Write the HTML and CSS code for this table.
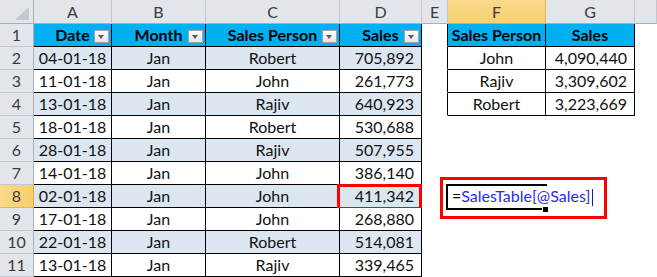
FILE: index.html
```html
<!DOCTYPE html>
<html>
<head>
<meta charset="utf-8">
<link rel="stylesheet" href="styles.css">
</head>
<body>
<div class="sheet">
  <!-- header row -->
  <div class="ch corner"><svg class="tri" width="14" height="13" viewBox="0 0 14 13"><polygon points="14,0 14,13 0,13" fill="#c3c8ce"/></svg></div>
  <div class="ch">A</div>
  <div class="ch">B</div>
  <div class="ch">C</div>
  <div class="ch">D</div>
  <div class="ch">E</div>
  <div class="ch sel">F</div>
  <div class="ch">G</div>
  <div class="ch"></div>

  <!-- row 1 -->
  <div class="rh">1</div>
  <div class="t hd">Date<span class="fb"></span></div>
  <div class="t hd">Month<span class="fb"></span></div>
  <div class="t hd">Sales Person<span class="fb"></span></div>
  <div class="t hd">Sales<span class="fb"></span></div>
  <div class="e edge"></div>
  <div class="t hd">Sales Person</div>
  <div class="t hd">Sales</div>
  <div class="e"></div>

  <!-- row 2 -->
  <div class="rh">2</div>
  <div class="t alt">04-01-18</div>
  <div class="t alt">Jan</div>
  <div class="t alt">Robert</div>
  <div class="t alt num">705,892</div>
  <div class="e edge"></div>
  <div class="t">John</div>
  <div class="t num">4,090,440</div>
  <div class="e"></div>

  <!-- row 3 -->
  <div class="rh">3</div>
  <div class="t">11-01-18</div>
  <div class="t">Jan</div>
  <div class="t">John</div>
  <div class="t num">261,773</div>
  <div class="e edge"></div>
  <div class="t">Rajiv</div>
  <div class="t num">3,309,602</div>
  <div class="e"></div>

  <!-- row 4 -->
  <div class="rh">4</div>
  <div class="t alt">13-01-18</div>
  <div class="t alt">Jan</div>
  <div class="t alt">Rajiv</div>
  <div class="t alt num">640,923</div>
  <div class="e edge"></div>
  <div class="t">Robert</div>
  <div class="t num">3,223,669</div>
  <div class="e"></div>

  <!-- row 5 -->
  <div class="rh">5</div>
  <div class="t">18-01-18</div>
  <div class="t">Jan</div>
  <div class="t">Robert</div>
  <div class="t num">530,688</div>
  <div class="e"></div>
  <div class="e"></div>
  <div class="e"></div>
  <div class="e"></div>

  <!-- row 6 -->
  <div class="rh">6</div>
  <div class="t alt">28-01-18</div>
  <div class="t alt">Jan</div>
  <div class="t alt">Rajiv</div>
  <div class="t alt num">507,955</div>
  <div class="e"></div>
  <div class="e"></div>
  <div class="e"></div>
  <div class="e"></div>

  <!-- row 7 -->
  <div class="rh">7</div>
  <div class="t">14-01-18</div>
  <div class="t">Jan</div>
  <div class="t">John</div>
  <div class="t num">386,140</div>
  <div class="e"></div>
  <div class="e"></div>
  <div class="e"></div>
  <div class="e"></div>

  <!-- row 8 -->
  <div class="rh sel">8</div>
  <div class="t alt">02-01-18</div>
  <div class="t alt">Jan</div>
  <div class="t alt">John</div>
  <div class="t alt num mark">411,342</div>
  <div class="e"></div>
  <div class="e act"><span class="eq">=</span><span class="ref">SalesTable[@Sales]</span><span class="caret"></span></div>
  <div class="e"></div>
  <div class="e"></div>

  <!-- row 9 -->
  <div class="rh">9</div>
  <div class="t">17-01-18</div>
  <div class="t">Jan</div>
  <div class="t">John</div>
  <div class="t num">268,880</div>
  <div class="e"></div>
  <div class="e"></div>
  <div class="e"></div>
  <div class="e"></div>

  <!-- row 10 -->
  <div class="rh">10</div>
  <div class="t alt">22-01-18</div>
  <div class="t alt">Jan</div>
  <div class="t alt">Robert</div>
  <div class="t alt num">514,081</div>
  <div class="e"></div>
  <div class="e"></div>
  <div class="e"></div>
  <div class="e"></div>

  <!-- row 11 -->
  <div class="rh">11</div>
  <div class="t">13-01-18</div>
  <div class="t">Jan</div>
  <div class="t">Rajiv</div>
  <div class="t num">339,465</div>
  <div class="e"></div>
  <div class="e"></div>
  <div class="e"></div>
  <div class="e"></div>

  <div class="callout"></div>
</div>
</body>
</html>
```

FILE: styles.css
```css
html, body {
  margin: 0;
  padding: 0;
  background: #ffffff;
}

.sheet {
  position: relative;
  width: 657px;
  height: 277px;
  overflow: hidden;
  display: grid;
  grid-template-columns: 34px 78px 94px 134px 82px 26px 98px 89px 1fr;
  grid-template-rows: 24px repeat(11, 23px);
  font-family: Lato, "Open Sans", sans-serif;
  font-size: 16px;
  color: #111111;
}

.sheet > div {
  box-sizing: border-box;
  position: relative;
  border-right: 1px solid transparent;
  border-bottom: 1px solid transparent;
  line-height: 22px;
  white-space: nowrap;
  text-align: center;
}

/* column headers */
.sheet > .ch {
  background: #e2e6eb;
  border-right-color: #c3c8ce;
  border-bottom-color: #a9b0b8;
  color: #3a3a3a;
  line-height: 23px;
}
.sheet > .ch.sel {
  background: linear-gradient(#f9d98b, #f7cf6e);
  border-bottom-color: #e0a83a;
  border-right-color: #e6b45a;
}
.sheet > .corner {
  border-right-color: #a9b0b8;
}
.tri {
  position: absolute;
  right: 4px;
  bottom: 3px;
}

/* row headers */
.sheet > .rh {
  background: #e2e6eb;
  border-right-color: #a9b0b8;
  border-bottom-color: #c3c8ce;
  color: #3a3a3a;
}
.sheet > .rh.sel {
  background: linear-gradient(90deg, #f9d98b, #f7cf6e);
  border-right-color: #e0a83a;
  border-bottom-color: #e6b45a;
}

/* table cells */
.sheet > .t {
  border-right-color: #000000;
  border-bottom-color: #000000;
  background: #ffffff;
}
.sheet > .t.alt {
  background: #dce6f1;
}
.sheet > .t.hd {
  background: #00b0f0;
  font-weight: 700;
  color: #000000;
}
.sheet > .t.num {
  text-align: right;
  padding-right: 7px;
}

.sheet > .e.edge {
  border-right-color: #000000;
}

/* filter button */
.fb {
  position: absolute;
  right: 2px;
  top: 6px;
  width: 15px;
  height: 13px;
  box-sizing: border-box;
  border: 1px solid #a3a3a3;
  background: linear-gradient(#fdfdfd, #e6e6e6);
}
.fb::after {
  content: "";
  position: absolute;
  left: 3px;
  top: 4px;
  border-left: 3.5px solid transparent;
  border-right: 3.5px solid transparent;
  border-top: 4px solid #5c5c5c;
}

/* red highlight on D8 */
.mark::after {
  content: "";
  position: absolute;
  left: -3px;
  right: -1px;
  top: -1px;
  bottom: -3px;
  border: 3px solid #ff0000;
}

/* active editing cell F8 */
.sheet > .act {
  text-align: left;
  padding-left: 4px;
  overflow: visible;
  z-index: 2;
}
.act::before {
  content: "";
  position: absolute;
  left: -2px;
  right: -2px;
  top: -1px;
  bottom: -3px;
  border: 2px solid #000000;
  border-right: none;
}
.act::after {
  content: "";
  position: absolute;
  right: -3px;
  bottom: -5px;
  width: 5px;
  height: 5px;
  background: #000000;
  border: 1px solid #ffffff;
  border-bottom: none;
  border-right: none;
}
.eq {
  color: #000000;
}
.ref {
  color: #2b2bf0;
}
.caret {
  display: inline-block;
  width: 1px;
  height: 17px;
  margin-left: 2px;
  vertical-align: -4px;
  background: #1a1aa0;
}

/* annotation box around the formula */
.sheet > .callout {
  position: absolute;
  left: 440px;
  top: 177px;
  width: 167px;
  height: 42px;
  box-sizing: border-box;
  border: 3px solid #ff0000;
  z-index: 3;
}
```
